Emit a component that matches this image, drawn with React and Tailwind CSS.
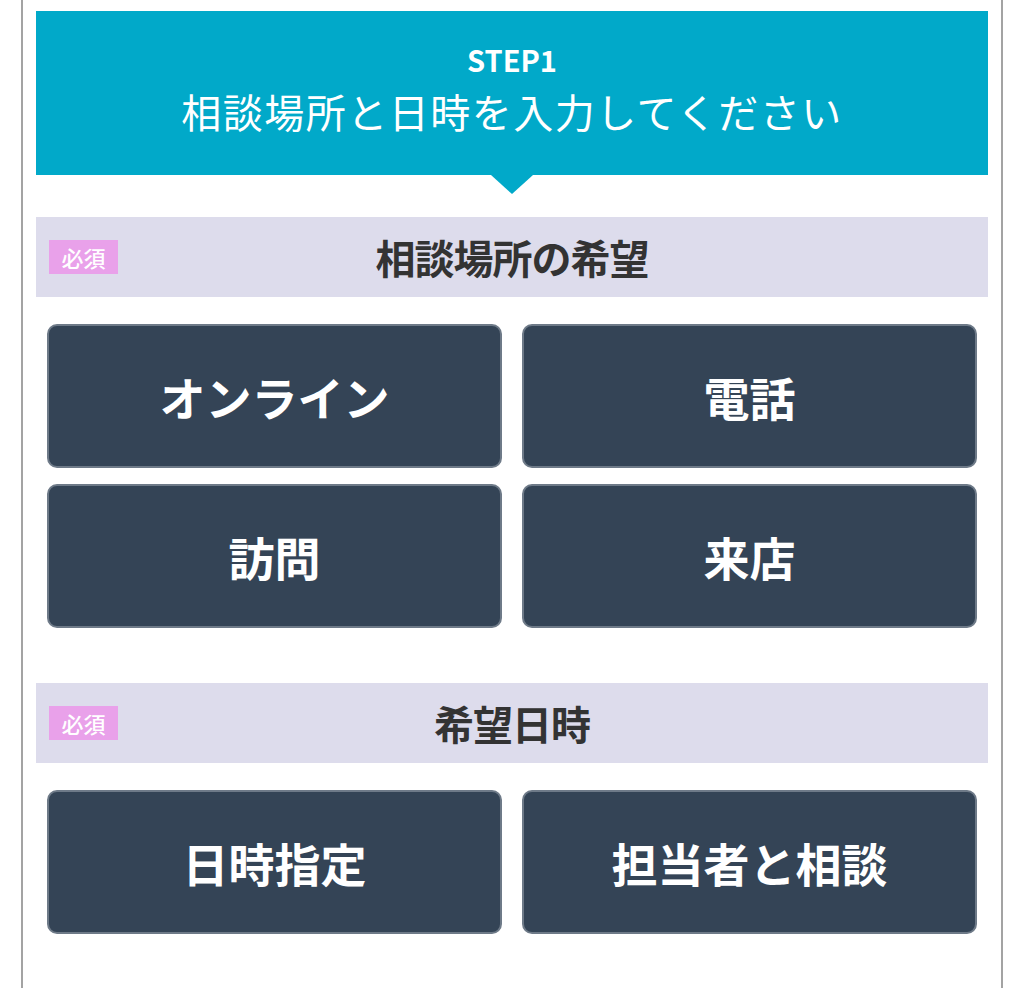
import React from 'react';

const FONT = "font-['Noto_Sans_CJK_JP','Noto_Sans',sans-serif]";

const Badge = () => (
    <span className="absolute left-[13px] top-1/2 -translate-y-1/2 w-[69px] h-[34px] bg-[#e9a1ea] text-white text-[22px] font-medium leading-none flex items-center justify-center">
        必須
    </span>
);

const SectionBar = ({ title }) => (
    <div className="relative h-[80px] bg-[#dddcec] flex items-center justify-center">
        <Badge />
        <h2 className="text-[40px] font-bold text-[#333] leading-none tracking-[-1px]">{title}</h2>
    </div>
);

const Choice = ({ label }) => (
    <button className="h-[144px] rounded-[10px] bg-[#344456] border-2 border-[#6e7a88] text-white text-[46px] font-bold leading-none flex items-center justify-center">
        {label}
    </button>
);

const Section = ({ title, options, className = '' }) => (
    <section className={className}>
        <SectionBar title={title} />
        <div className="grid grid-cols-2 gap-x-5 gap-y-4 px-[11px] mt-[27px]">
            {options.map((o) => <Choice key={o} label={o} />)}
        </div>
    </section>
);

export default function App() {
    return (
        <div className={`min-h-screen bg-white ${FONT}`}>
            <div className="mx-[21px] min-h-[988px] border-x-2 border-[#a3a3a3] px-[13px] pt-[11px]">
                <header className="relative h-[164px] bg-[#01a9c9] text-white flex flex-col items-center justify-center">
                    <p className="text-[29px] font-bold leading-none -mt-[11px]">STEP1</p>
                    <h1 className="text-[40px] font-normal leading-none mt-[17px] tracking-[1.5px]">相談場所と日時を入力してください</h1>
                    <span className="absolute left-1/2 -translate-x-1/2 top-full w-0 h-0 border-x-[21px] border-t-[19px] border-x-transparent border-t-[#01a9c9]" />
                </header>

                <Section className="mt-[42px]" title="相談場所の希望" options={['オンライン', '電話', '訪問', '来店']} />
                <Section className="mt-[55px]" title="希望日時" options={['日時指定', '担当者と相談']} />
            </div>
        </div>
    );
}
